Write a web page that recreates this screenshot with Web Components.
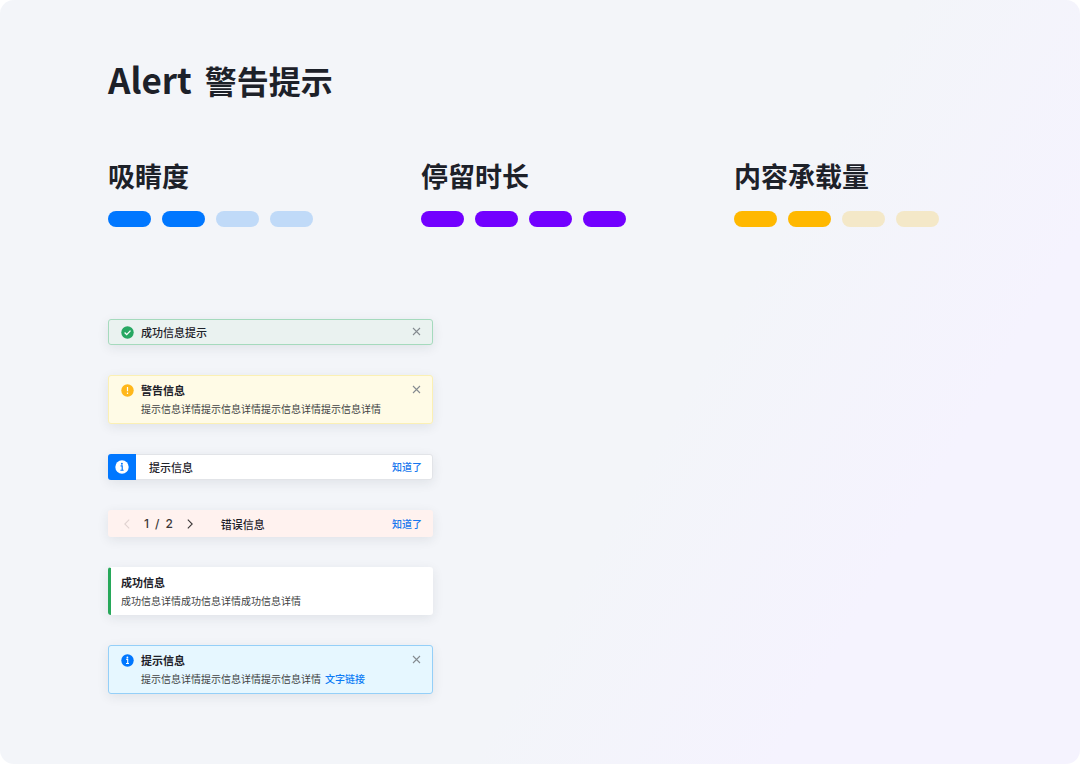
<!DOCTYPE html>
<html lang="zh-CN">
<head>
    <meta charset="UTF-8">
    <title>Alert 警告提示</title>
    <style>
        body {
            margin: 0;
            background: #fff;
            color: #1d2129;
            font-family: "Noto Sans CJK SC", sans-serif;
        }
    </style>
</head>
<body>
    <alert-page>
        <span slot="latin">Alert</span>
        <span slot="title">警告提示</span>

        <level-meter slot="level" value="2" style="--on: #0077ff; --off: #c0daf8">吸睛度</level-meter>
        <level-meter slot="level" value="4" style="--on: #7200ff; --off: #dac8f8">停留时长</level-meter>
        <level-meter slot="level" value="2" style="--on: #ffb800; --off: #f4e8c8">内容承载量</level-meter>

        <alert-box type="success" icon="check" closable>成功信息提示</alert-box>
        <alert-box type="warning" icon="warn" closable>
            警告信息
            <span slot="detail">提示信息详情提示信息详情提示信息详情提示信息详情</span>
        </alert-box>
        <alert-box type="block" icon="info" action="知道了">提示信息</alert-box>
        <alert-box type="error" action="知道了">
            <alert-pager slot="lead" page="1" total="2"></alert-pager>
            错误信息
        </alert-box>
        <alert-box type="bar">
            成功信息
            <span slot="detail">成功信息详情成功信息详情成功信息详情</span>
        </alert-box>
        <alert-box type="info" icon="info" closable>
            提示信息
            <span slot="detail">提示信息详情提示信息详情提示信息详情</span>
            <text-link slot="detail">文字链接</text-link>
        </alert-box>
    </alert-page>

    <template id="page">
        <style>
            :host {
                display: block;
                box-sizing: border-box;
                min-height: 100vh;
                padding: 53px 10% 64px;
                border-radius: 14px;
                background: linear-gradient(120deg, #f3f5f9 0%, #f3f5f9 60%, #f5f3fe 80%);
            }
            h1 {
                display: flex;
                align-items: baseline;
                gap: 13px;
                margin: 0;
                font-size: 32px;
                font-weight: 700;
                line-height: 52px;
            }
            .latin { font-size: 35px; }
            .levels {
                display: grid;
                grid-template-columns: repeat(3, 1fr);
                gap: 75px;
                margin-top: 52px;
            }
            .alerts {
                display: flex;
                flex-direction: column;
                gap: 30px;
                max-width: 325px;
                margin-top: 92px;
            }
        </style>
        <h1><span class="latin"><slot name="latin"></slot></span><slot name="title"></slot></h1>
        <section class="levels"><slot name="level"></slot></section>
        <section class="alerts"><slot></slot></section>
    </template>

    <template id="meter">
        <style>
            :host { display: block; }
            h2 {
                margin: 0 0 17px;
                font-size: 27px;
                font-weight: 700;
                line-height: 36px;
            }
            .pills { display: flex; gap: 11px; }
            i {
                width: 43px;
                height: 16px;
                border-radius: 8px;
                background: var(--off);
            }
            i.on { background: var(--on); }
        </style>
        <h2><slot></slot></h2>
        <div class="pills" role="img"></div>
    </template>

    <template id="alert">
        <style>
            :host {
                display: flex;
                align-items: flex-start;
                box-sizing: border-box;
                padding: 4px 10px 4px 12px;
                border: 1px solid transparent;
                border-radius: 3px;
                box-shadow: 0 3px 12px rgba(30, 40, 60, .09);
                font-size: 11px;
                font-weight: 500;
                line-height: 16px;
            }
            :host([type="success"]) { background: #eaf2f0; border-color: #a5dabd; }
            :host([type="warning"]) { background: #fffbe6; border-color: #fbf0b4; }
            :host([type="block"]) { background: #fff; border-color: #e2e4e8; padding-left: 0; }
            :host([type="error"]) { background: #fff2ef; padding-top: 5px; }
            :host([type="bar"]) {
                background: #fff;
                border-left: 3px solid #27a85a;
                border-bottom: 0;
                padding-left: 10px;
            }
            :host([type="info"]) { background: #e6f7ff; border-color: #94cff8; }
            :host([type="warning"]), :host([type="bar"]), :host([type="info"]) {
                padding-top: 6px;
                padding-bottom: 6px;
            }
            .lead { display: flex; }
            .lead svg { width: 13px; height: 13px; margin: 2px 7px 0 0; }
            :host([type="block"]) .lead {
                align-items: center;
                justify-content: center;
                width: 28px;
                margin: -5px 13px -5px -1px;
                align-self: stretch;
                border-radius: 3px 0 0 3px;
                background: #0077ff;
            }
            :host([type="block"]) .lead svg { width: 14px; height: 14px; margin: 0; }
            .body { flex: 1; min-width: 0; }
            .title.strong { font-weight: 700; }
            .detail {
                display: flex;
                gap: 4px;
                margin-top: 3px;
                color: #414243;
                font-size: 10px;
                font-weight: 400;
                white-space: nowrap;
            }
            button {
                padding: 0;
                border: 0;
                background: none;
                font: inherit;
                cursor: pointer;
            }
            .close { display: flex; margin-top: 2px; color: #858b90; }
            .close svg { width: 11px; height: 11px; }
            .action { color: #1677ee; font-size: 10px; line-height: 16px; }
        </style>
        <div class="lead"><slot name="lead"></slot></div>
        <div class="body">
            <div class="title"><slot></slot></div>
        </div>
    </template>

    <template id="pager">
        <style>
            :host { display: flex; align-items: center; margin-right: 25px; }
            button {
                display: flex;
                padding: 0;
                border: 0;
                background: none;
                color: #3c3838;
                cursor: pointer;
            }
            button:disabled { color: #e0d2d0; }
            svg { width: 12px; height: 12px; }
            .count {
                display: flex;
                gap: 6px;
                margin: 0 11px;
                color: #3c3838;
                font-family: Inter, sans-serif;
                font-size: 12px;
            }
        </style>
        <button aria-label="上一条"><svg viewBox="0 0 11 11" fill="none" stroke="currentColor"><path d="M7.5 1.5l-4 4 4 4"/></svg></button>
        <div class="count"><span class="page"></span><span>/</span><span class="total"></span></div>
        <button aria-label="下一条"><svg viewBox="0 0 11 11" fill="none" stroke="currentColor"><path d="M3.5 1.5l4 4-4 4"/></svg></button>
    </template>

    <script>
        const icons = {
            check: `<svg viewBox="0 0 13 13"><circle cx="6.5" cy="6.5" r="6.2" fill="#27a862"/><path d="M3.6 6.5l2.1 2.1 3.8-4" fill="none" stroke="#fff" stroke-width="1.3"/></svg>`,
            warn: `<svg viewBox="0 0 13 13"><circle cx="6.5" cy="6.5" r="6.2" fill="#ffb71b"/><path d="M6.5 3v4.3M6.5 8.6v1.3" stroke="#fff" stroke-width="1.2"/></svg>`,
            info: `<svg viewBox="0 0 13 13"><circle cx="6.5" cy="6.5" r="6.2" fill="var(--disc, #0077ff)"/><path d="M5.2 5.4h1.5v4M5 9.5h3" fill="none" stroke="var(--mark, #fff)" stroke-width="1.1"/><circle cx="6.4" cy="3.5" r=".9" fill="var(--mark, #fff)"/></svg>`,
            close: `<svg viewBox="0 0 11 11"><path d="M2 2l7 7M9 2l-7 7" fill="none" stroke="currentColor" stroke-width="1.1"/></svg>`
        };

        class TemplateElement extends HTMLElement {
            constructor(id) {
                super();
                this.attachShadow({mode: 'open'});
                this.shadowRoot.append(document.getElementById(id).content.cloneNode(true));
            }
            find(selector) {
                return this.shadowRoot.querySelector(selector);
            }
        }

        class AlertPage extends TemplateElement {
            constructor() { super('page'); }
        }

        class LevelMeter extends TemplateElement {
            constructor() {
                super('meter');
                const value = Number(this.getAttribute('value'));
                const pills = this.find('.pills');
                pills.setAttribute('aria-label', `${value} / 4`);
                for (let n = 0; n < 4; n++) {
                    const pill = document.createElement('i');
                    pill.classList.toggle('on', n < value);
                    pills.append(pill);
                }
            }
        }

        class AlertBox extends TemplateElement {
            constructor() {
                super('alert');
                const icon = this.getAttribute('icon');
                if (icon) {
                    this.find('.lead').innerHTML = icons[icon];
                }
                // white disc on the blue block
                if (this.getAttribute('type') === 'block') {
                    this.find('.lead').style.cssText = '--disc: #fff; --mark: #0077ff';
                }
                if (this.querySelector('[slot=detail]')) {
                    this.find('.title').classList.add('strong');
                    const detail = document.createElement('div');
                    detail.className = 'detail';
                    detail.innerHTML = '<slot name="detail"></slot>';
                    this.find('.body').append(detail);
                }
                if (this.hasAttribute('action')) {
                    const button = document.createElement('button');
                    button.className = 'action';
                    button.textContent = this.getAttribute('action');
                    this.shadowRoot.append(button);
                }
                if (this.hasAttribute('closable')) {
                    const button = document.createElement('button');
                    button.className = 'close';
                    button.setAttribute('aria-label', '关闭');
                    button.innerHTML = icons.close;
                    button.addEventListener('click', () => this.remove());
                    this.shadowRoot.append(button);
                }
            }
        }

        class AlertPager extends TemplateElement {
            constructor() {
                super('pager');
                this.page = Number(this.getAttribute('page'));
                this.total = Number(this.getAttribute('total'));
                const [prev, next] = this.shadowRoot.querySelectorAll('button');
                prev.addEventListener('click', () => this.go(-1));
                next.addEventListener('click', () => this.go(1));
                this.go(0);
            }
            go(step) {
                this.page += step;
                const [prev, next] = this.shadowRoot.querySelectorAll('button');
                prev.disabled = this.page <= 1;
                next.disabled = this.page >= this.total;
                this.find('.page').textContent = this.page;
                this.find('.total').textContent = this.total;
            }
        }

        class TextLink extends HTMLElement {
            constructor() {
                super();
                this.attachShadow({mode: 'open'});
                this.shadowRoot.innerHTML = `
                    <style>
                        :host { display: block; }
                        a { color: #0d7cf5; font-weight: 500; text-decoration: none; }
                    </style>
                    <a href="#"><slot></slot></a>`;
            }
        }

        customElements.define('alert-page', AlertPage);
        customElements.define('level-meter', LevelMeter);
        customElements.define('alert-box', AlertBox);
        customElements.define('alert-pager', AlertPager);
        customElements.define('text-link', TextLink);
    </script>
</body>
</html>
